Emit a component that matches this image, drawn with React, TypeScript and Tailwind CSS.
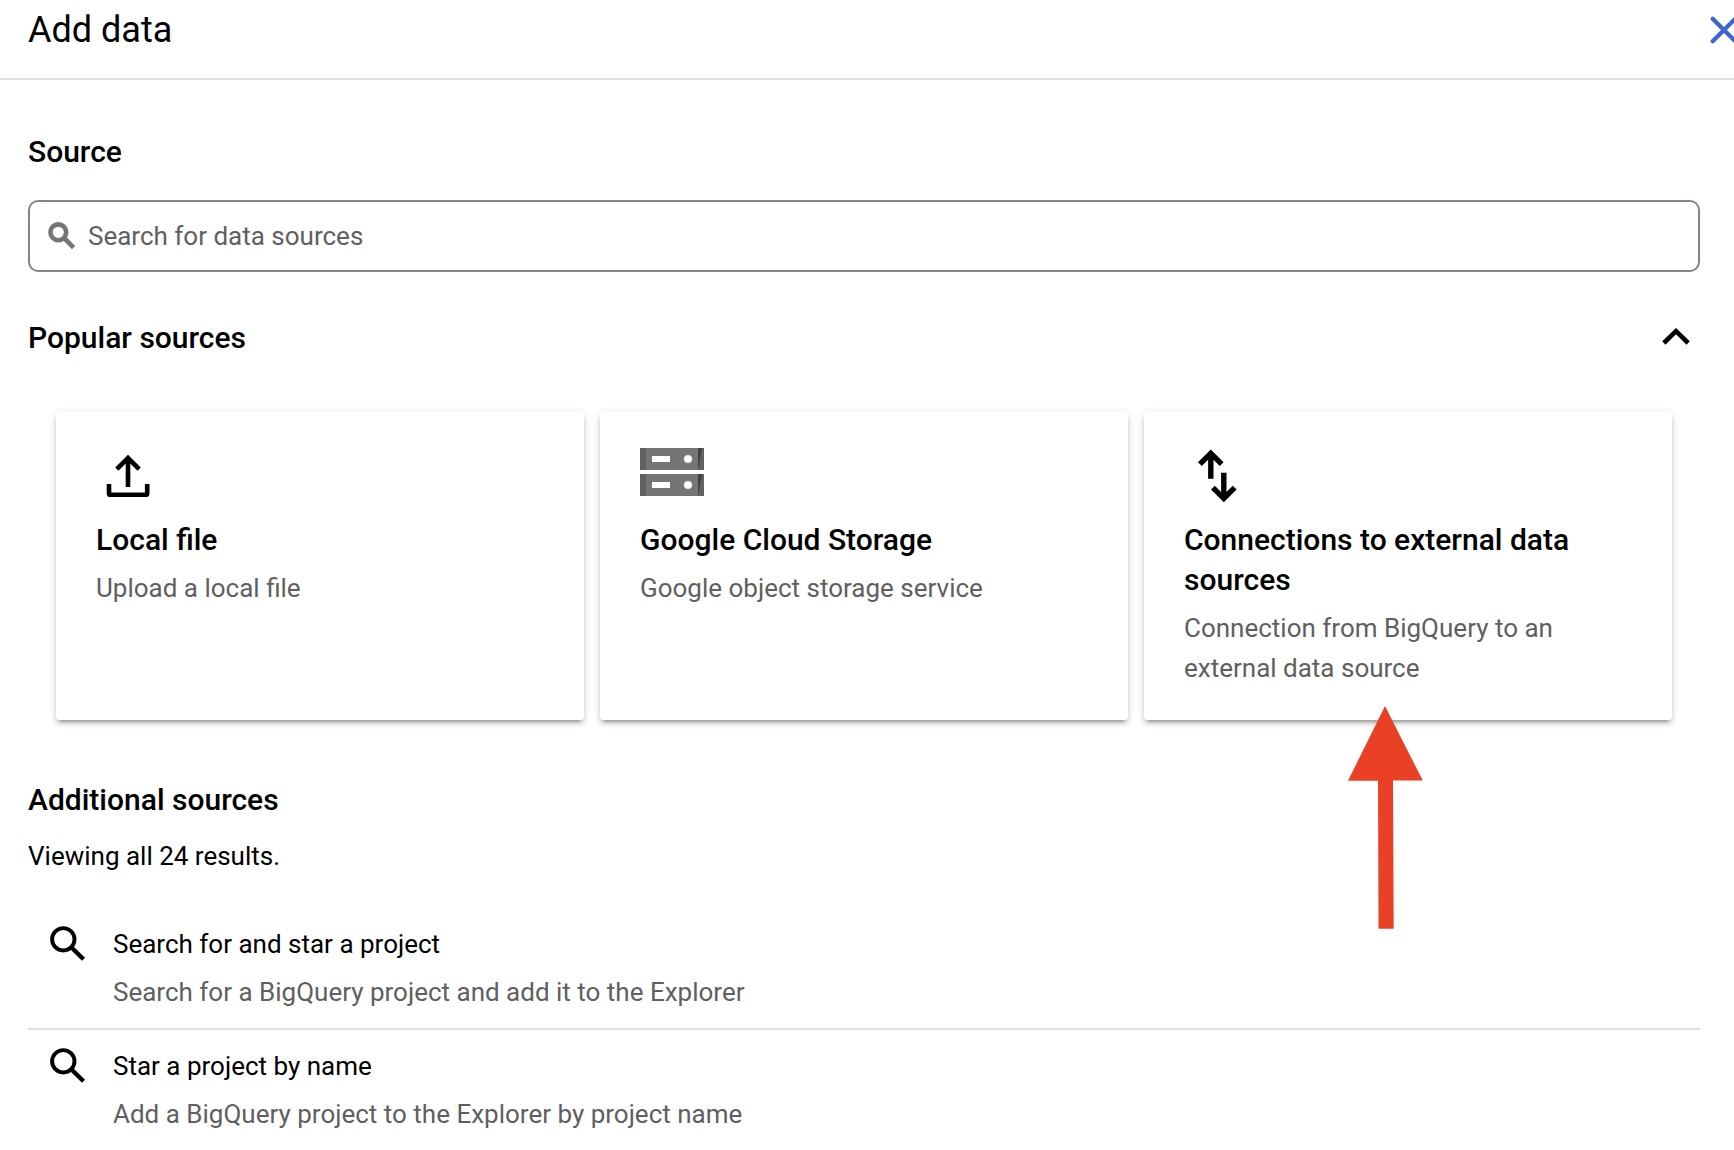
import React from "react";

const sources = [
  { title: "Search for and star a project", text: "Search for a BigQuery project and add it to the Explorer" },
  { title: "Star a project by name", text: "Add a BigQuery project to the Explorer by project name" },
];

function UploadIcon() {
  return (
    <svg viewBox="0 0 64 64" className="h-16 w-16" fill="none" stroke="#000" strokeWidth="4.6">
      <path d="M32 43V14M20.8 25.2 32 14l11.2 11.2" />
      <path d="M13 40v9.2q0 1.600 1.600 1.600h35q1.600 0 1.600-1.600V40" />
    </svg>
  );
}

function ServerUnit({ y }: { y: number }) {
  return (
    <g transform={`translate(0 ${y})`}>
      <path fill="#757575" d="M0 0h64v22H0z" />
      <path fill="#616161" d="M0 0h6v22H0zM58 0h6v22h-6z" />
      <path fill="#424242" d="M58 0h4l-4 22z" />
      <path fill="#fff" d="M12 8h18v6H12z" />
      <circle cx="48" cy="11" r="4" fill="#fff" />
    </g>
  );
}

function StorageIcon() {
  return (
    <svg viewBox="0 0 64 48" className="h-12 w-16">
      <ServerUnit y={0} />
      <ServerUnit y={26} />
    </svg>
  );
}

function ConnectionIcon() {
  return (
    <svg viewBox="0 0 42 54" className="h-[54px] w-[42px] overflow-visible blur-[0.6px]" fill="none" stroke="#000" strokeWidth="5.4">
      <path d="M13.8 29.800V5M2.900 15.200 13.8 4.300l10.900 10.900M26.8 23.800V49M15.900 38.600 26.8 49.500l10.900-10.900" />
    </svg>
  );
}

function SearchIcon() {
  return (
    <svg viewBox="0 0 36 36" className="h-9 w-9" fill="none" stroke="#000" strokeWidth="3.9">
      <circle cx="13.3" cy="13.3" r="11.2" />
      <path d="M21.500 21.500l12 11.800" strokeWidth="4.400" />
    </svg>
  );
}

function Card({ icon, title, text }: { icon: React.ReactNode; title: string; text: string }) {
  return (
    <div className="h-[308px] w-[528px] rounded-[4px] bg-white px-10 pt-8 shadow-[0_6px_2px_-4px_rgba(0,0,0,0.2),0_4px_4px_0_rgba(0,0,0,0.14),0_2px_10px_0_rgba(0,0,0,0.12)]">
      <div className="h-[76px]">{icon}</div>
      <h3 className="text-[30px] leading-10 font-medium">{title}</h3>
      <p className="mt-2 text-[26px] leading-10 text-[#5f5f5f]">{text}</p>
    </div>
  );
}

export default function App() {
  return (
    <div className="relative h-[1150px] w-[1734px] overflow-hidden bg-white font-[Roboto,sans-serif] text-black">
      <header className="flex h-20 items-start justify-between border-b-2 border-[#e0e0e0] pl-7">
        <h1 className="pt-[9px] text-[36px] leading-[42px]">Add data</h1>
        <svg viewBox="0 0 24 28" className="mt-4 h-7 w-6 shrink-0" fill="none" stroke="#3f66cf" strokeWidth="4.3" strokeLinecap="round">
          <path d="M2.7 2.7l22.6 22.6M25.3 2.7L2.7 25.3" />
        </svg>
      </header>

      <main className="pr-[34px] pl-7">
        <h2 className="pt-[52px] text-[30px] leading-10 font-medium">Source</h2>
        <div className="mt-7 flex h-[72px] items-center rounded-[10px] border-2 border-[#80868b] pl-[18px]">
          <svg viewBox="0 0 28 28" className="h-7 w-7" fill="none" stroke="#757575" strokeWidth="4.6">
            <circle cx="10.3" cy="10.3" r="7.9" />
            <path d="M15.7 15.7l9.9 9.9" />
          </svg>
          <span className="ml-3 text-[26px] text-[#5f5f5f]">Search for data sources</span>
        </div>

        <div className="mt-[46px] flex items-center justify-between pr-2">
          <h2 className="text-[30px] leading-10 font-medium">Popular sources</h2>
          <svg viewBox="0 0 32 20" className="h-5 w-8" fill="none" stroke="#000" strokeWidth="4.6">
            <path d="M3.8 15 16 3.2 28.2 15" />
          </svg>
        </div>

        <div className="mt-[54px] flex gap-4 pl-7">
          <Card icon={<UploadIcon />} title="Local file" text="Upload a local file" />
          <Card icon={<div className="pt-1"><StorageIcon /></div>} title="Google Cloud Storage" text="Google object storage service" />
          <Card icon={<div className="pt-[5px] pl-[13px]"><ConnectionIcon /></div>} title="Connections to external data sources" text="Connection from BigQuery to an external data source" />
        </div>

        <h2 className="mt-[60px] text-[30px] leading-10 font-medium">Additional sources</h2>
        <p className="mt-4 text-[26px] leading-10">Viewing all 24 results.</p>

        <ul className="mt-8">
          {sources.map((s) => (
            <li key={s.title} className="flex h-[122px] border-b-2 border-[#e0e0e0] pt-4 pl-[22px] last:border-b-0">
              <div className="w-[63px] pt-0.5"><SearchIcon /></div>
              <div>
                <p className="text-[26px] leading-10">{s.title}</p>
                <p className="mt-2 text-[26px] leading-10 text-[#5f5f5f]">{s.text}</p>
              </div>
            </li>
          ))}
        </ul>
      </main>

      <svg viewBox="0 0 75 223" className="absolute top-[706px] left-[1348px] h-[223px] w-[75px]" fill="#ea4126">
        <path d="M37 0l37.8 74.6H45L45.7 222.7H30.5L30 74.7H0z" />
      </svg>
    </div>
  );
}
